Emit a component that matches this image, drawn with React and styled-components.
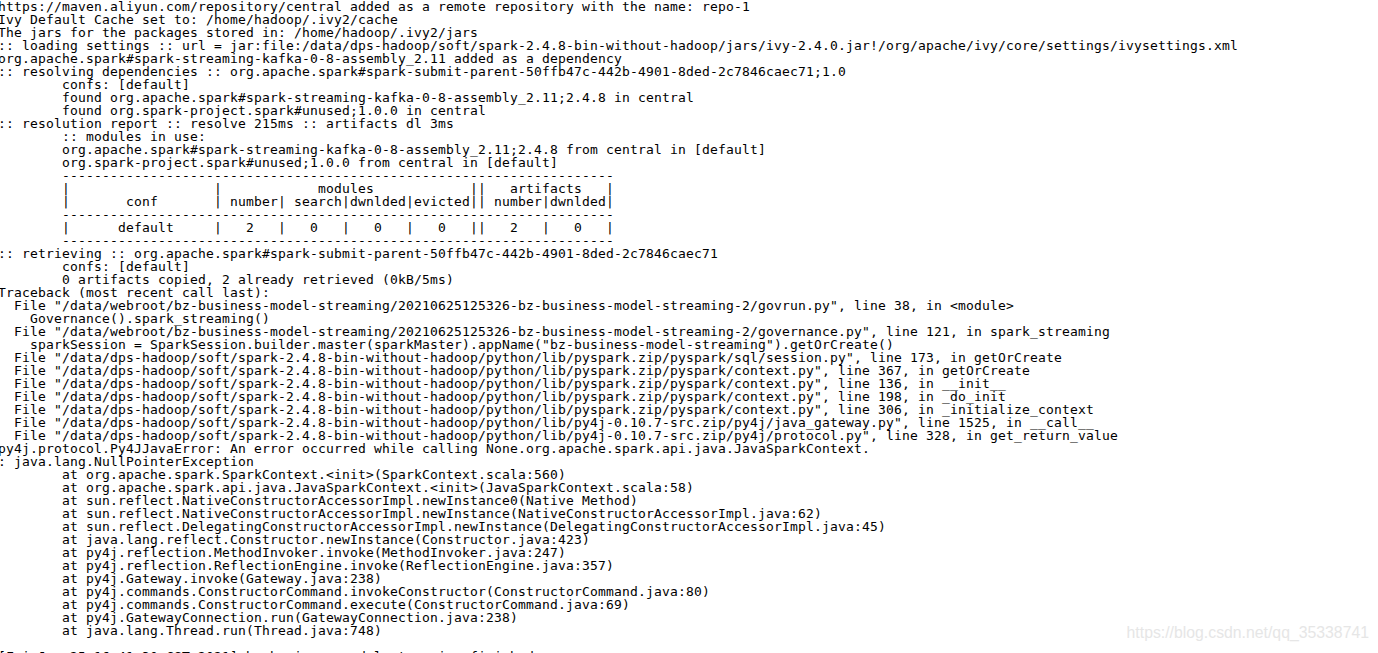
import styled, { createGlobalStyle } from 'styled-components';

const GlobalStyle = createGlobalStyle`
  html, body {
    margin: 0;
    padding: 0;
    background: #ffffff;
    overflow: hidden;
  }
`;

const DIVIDER = '\t' + '-'.repeat(69);
const DATA = '/data/dps-hadoop/soft/spark-2.4.8-bin-without-hadoop/python/lib';
const WEBROOT = '/data/webroot/bz-business-model-streaming/20210625125326-bz-business-model-streaming-2';

const lines = [
  'https://maven.aliyun.com/repository/central added as a remote repository with the name: repo-1',
  'Ivy Default Cache set to: /home/hadoop/.ivy2/cache',
  'The jars for the packages stored in: /home/hadoop/.ivy2/jars',
  ':: loading settings :: url = jar:file:/data/dps-hadoop/soft/spark-2.4.8-bin-without-hadoop/jars/ivy-2.4.0.jar!/org/apache/ivy/core/settings/ivysettings.xml',
  'org.apache.spark#spark-streaming-kafka-0-8-assembly_2.11 added as a dependency',
  ':: resolving dependencies :: org.apache.spark#spark-submit-parent-50ffb47c-442b-4901-8ded-2c7846caec71;1.0',
  '\tconfs: [default]',
  '\tfound org.apache.spark#spark-streaming-kafka-0-8-assembly_2.11;2.4.8 in central',
  '\tfound org.spark-project.spark#unused;1.0.0 in central',
  ':: resolution report :: resolve 215ms :: artifacts dl 3ms',
  '\t:: modules in use:',
  '\torg.apache.spark#spark-streaming-kafka-0-8-assembly_2.11;2.4.8 from central in [default]',
  '\torg.spark-project.spark#unused;1.0.0 from central in [default]',
  DIVIDER,
  '\t|                  |            modules            ||   artifacts   |',
  '\t|       conf       | number| search|dwnlded|evicted|| number|dwnlded|',
  DIVIDER,
  '\t|      default     |   2   |   0   |   0   |   0   ||   2   |   0   |',
  DIVIDER,
  ':: retrieving :: org.apache.spark#spark-submit-parent-50ffb47c-442b-4901-8ded-2c7846caec71',
  '\tconfs: [default]',
  '\t0 artifacts copied, 2 already retrieved (0kB/5ms)',
  'Traceback (most recent call last):',
  `  File "${WEBROOT}/govrun.py", line 38, in <module>`,
  '    Governance().spark_streaming()',
  `  File "${WEBROOT}/governance.py", line 121, in spark_streaming`,
  '    sparkSession = SparkSession.builder.master(sparkMaster).appName("bz-business-model-streaming").getOrCreate()',
  `  File "${DATA}/pyspark.zip/pyspark/sql/session.py", line 173, in getOrCreate`,
  `  File "${DATA}/pyspark.zip/pyspark/context.py", line 367, in getOrCreate`,
  `  File "${DATA}/pyspark.zip/pyspark/context.py", line 136, in __init__`,
  `  File "${DATA}/pyspark.zip/pyspark/context.py", line 198, in _do_init`,
  `  File "${DATA}/pyspark.zip/pyspark/context.py", line 306, in _initialize_context`,
  `  File "${DATA}/py4j-0.10.7-src.zip/py4j/java_gateway.py", line 1525, in __call__`,
  `  File "${DATA}/py4j-0.10.7-src.zip/py4j/protocol.py", line 328, in get_return_value`,
  'py4j.protocol.Py4JJavaError: An error occurred while calling None.org.apache.spark.api.java.JavaSparkContext.',
  ': java.lang.NullPointerException',
  '\tat org.apache.spark.SparkContext.<init>(SparkContext.scala:560)',
  '\tat org.apache.spark.api.java.JavaSparkContext.<init>(JavaSparkContext.scala:58)',
  '\tat sun.reflect.NativeConstructorAccessorImpl.newInstance0(Native Method)',
  '\tat sun.reflect.NativeConstructorAccessorImpl.newInstance(NativeConstructorAccessorImpl.java:62)',
  '\tat sun.reflect.DelegatingConstructorAccessorImpl.newInstance(DelegatingConstructorAccessorImpl.java:45)',
  '\tat java.lang.reflect.Constructor.newInstance(Constructor.java:423)',
  '\tat py4j.reflection.MethodInvoker.invoke(MethodInvoker.java:247)',
  '\tat py4j.reflection.ReflectionEngine.invoke(ReflectionEngine.java:357)',
  '\tat py4j.Gateway.invoke(Gateway.java:238)',
  '\tat py4j.commands.ConstructorCommand.invokeConstructor(ConstructorCommand.java:80)',
  '\tat py4j.commands.ConstructorCommand.execute(ConstructorCommand.java:69)',
  '\tat py4j.GatewayConnection.run(GatewayConnection.java:238)',
  '\tat java.lang.Thread.run(Thread.java:748)',
  '',
  '[Fri Jun 25 16:41:30 CST 2021] bz-business-model-streaming finished',
];

export default function App() {
  return (
    <>
      <GlobalStyle />
      <Screen>
        <Console>
          {lines.map((text, i) => (
            <Line key={i}>{text || ' '}</Line>
          ))}
        </Console>
        <Watermark>https://blog.csdn.net/qq_35338741</Watermark>
      </Screen>
    </>
  );
}

const Screen = styled.div`
  position: relative;
  width: 1378px;
  height: 653px;
  overflow: hidden;
  background: #ffffff;
`;

const Console = styled.div`
  display: flex;
  flex-direction: column;
  margin-left: -2px;
  font-family: 'DejaVu Sans Mono', 'Liberation Mono', monospace;
  font-size: 13px;
  letter-spacing: 0.173px;
  line-height: 13px;
  color: #000000;
  tab-size: 8;
`;

const Line = styled.div`
  height: 13px;
  white-space: pre;
`;

const Watermark = styled.div`
  position: absolute;
  right: 9px;
  bottom: 11px;
  font-family: 'Liberation Sans', Arial, sans-serif;
  font-size: 15.8px;
  color: #e6e6e6;
  white-space: nowrap;
`;
